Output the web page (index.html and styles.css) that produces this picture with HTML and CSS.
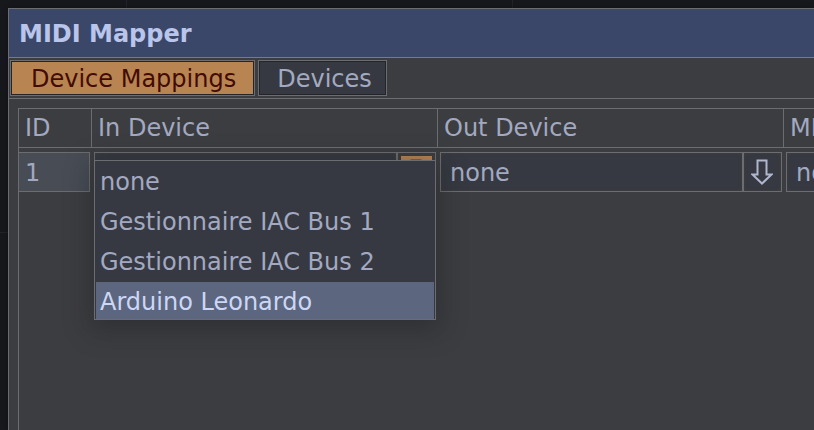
FILE: index.html
```html
<!DOCTYPE html>
<html lang="en">
<head>
<meta charset="utf-8">
<title>MIDI Mapper</title>
<link rel="stylesheet" href="styles.css">
</head>
<body>
<main class="window">
  <h1 class="titlebar">MIDI Mapper</h1>
  <nav class="tabs" role="tablist">
    <button class="tab tab-active" role="tab" aria-selected="true">Device Mappings</button>
    <button class="tab" role="tab" aria-selected="false">Devices</button>
  </nav>
  <section class="panel">
    <table class="mappings">
      <colgroup><col class="col-id"><col class="col-device"><col class="col-device"><col class="col-device"></colgroup>
      <thead>
        <tr><th>ID</th><th id="in-head">In Device</th><th id="out-head">Out Device</th><th id="midi-head">MIDI</th></tr>
      </thead>
      <tbody>
        <tr>
          <td class="id-cell"><div class="row-id">1</div></td>
          <td>
            <div class="combo">
              <select aria-labelledby="in-head"><option></option></select>
              <span class="arrow arrow-open"><svg width="22" height="26" viewBox="0 0 22 26"><path d="M6.500 1.500h9v14h5L11 24.500 1.500 15.500h5z"/></svg></span>
              <ul class="menu" role="listbox" aria-labelledby="in-head">
                <li role="option">none</li>
                <li role="option">Gestionnaire IAC Bus 1</li>
                <li role="option">Gestionnaire IAC Bus 2</li>
                <li role="option" class="highlighted" aria-selected="true">Arduino Leonardo</li>
              </ul>
            </div>
          </td>
          <td>
            <div class="combo">
              <select aria-labelledby="out-head"><option>none</option></select>
              <span class="arrow"><svg width="22" height="26" viewBox="0 0 22 26"><path d="M6.500 1.500h9v14h5L11 24.500 1.500 15.500h5z"/></svg></span>
            </div>
          </td>
          <td>
            <div class="combo">
              <select aria-labelledby="midi-head"><option>none</option></select>
              <span class="arrow"><svg width="22" height="26" viewBox="0 0 22 26"><path d="M6.500 1.500h9v14h5L11 24.500 1.500 15.500h5z"/></svg></span>
            </div>
          </td>
        </tr>
      </tbody>
    </table>
  </section>
</main>
</body>
</html>
```
FILE: styles.css
```css
* { box-sizing: border-box; }

:root {
  --line: #6c6d70;
  --text: #a3a9c0;
  --surface: #3c3d40;
  --field: #363941;
}

body {
  margin: 0;
  height: 100vh;
  padding: 8px 0 0 8px;
  overflow: hidden;
  color: var(--text);
  font: 24px/40px Verdana, "DejaVu Sans", sans-serif;
  background:
    linear-gradient(#25262c, #25262c) 126px 0 / 1px 100% no-repeat,
    linear-gradient(#25262c, #25262c) 512px 0 / 1px 100% no-repeat,
    linear-gradient(#25262c, #25262c) 0 232px / 100% 1px no-repeat,
    #18191d;
}

.window {
  display: flex;
  flex-direction: column;
  height: 100%;
  overflow: hidden;
  background: var(--surface);
  border: solid var(--line);
  border-width: 1px 0 0 1px;
  box-shadow: 0 0 8px #101114;
}

.titlebar {
  margin: 0;
  padding: 5px 10px 3px;
  font-size: 24px;
  color: #b9c5eb;
  background: #3b4769;
  border-bottom: 1px solid #737a94;
}

.tabs {
  display: flex;
  gap: 3px;
  padding: 2px 1px;
  border-bottom: 1px solid var(--line);
}

.tab {
  height: 36px;
  padding: 1px 14px 0 18px;
  font: inherit;
  line-height: 34px;
  color: var(--text);
  background: var(--field);
  border: 1px solid var(--line);
  box-shadow: inset 0 0 0 1px #24252a;
}

.tab-active {
  padding: 1px 18px 0 20px;
  color: #430b03;
  background: #b88552;
}

.panel {
  display: flex;
  flex: 1;
  padding: 9px 0 0 9px;
}

.mappings {
  flex: none;
  height: 100%;
  table-layout: fixed;
  width: 1112px;
  border-collapse: separate;
  border-spacing: 0;
  border-left: 1px solid var(--line);
}

.col-id { width: 73px; }
.col-device { width: 346px; }

th {
  height: 40px;
  padding: 0 6px;
  line-height: 38px;
  text-align: left;
  font-weight: normal;
  border: solid var(--line);
  border-width: 1px 1px 1px 0;
}

td {
  padding: 4px 2px;
  vertical-align: top;
}

.id-cell { padding-left: 0; }

.row-id {
  height: 40px;
  padding-left: 6px;
  background: #474c55;
  border: 1px solid var(--line);
  border-left: 0;
}

.combo {
  position: relative;
  display: flex;
  height: 40px;
  border: 1px solid var(--line);
}

.combo select {
  flex: 1;
  min-width: 0;
  padding: 0 9px;
  appearance: none;
  font: inherit;
  color: inherit;
  background: var(--field);
  border: 0;
  border-radius: 0;
  box-shadow: inset 0 0 3px 1px var(--surface);
}

.arrow {
  display: grid;
  place-items: center;
  width: 39px;
  padding-right: 1px;
  background: var(--field);
  border-left: 2px solid var(--line);
  box-shadow: inset 0 0 3px 1px var(--surface);
}

.arrow path {
  fill: none;
  stroke: #b0b6ce;
  stroke-width: 2;
}

.arrow-open {
  background: #b88552;
  box-shadow: inset 0 0 0 3px var(--surface);
}

.arrow-open path { stroke: #6b3a20; }

.menu {
  position: absolute;
  top: 7px;
  left: -1px;
  right: -1px;
  z-index: 1;
  margin: 0;
  padding: 1px 1px 0;
  list-style: none;
  background: #363941;
  border: 1px solid var(--line);
  box-shadow: 0 6px 24px 4px rgba(24, 25, 29, 0.35);
}

.menu li {
  padding: 0 4px;
}

.menu .highlighted {
  height: 37px;
  color: #ccd7f5;
  background: #5c667f;
}
```
